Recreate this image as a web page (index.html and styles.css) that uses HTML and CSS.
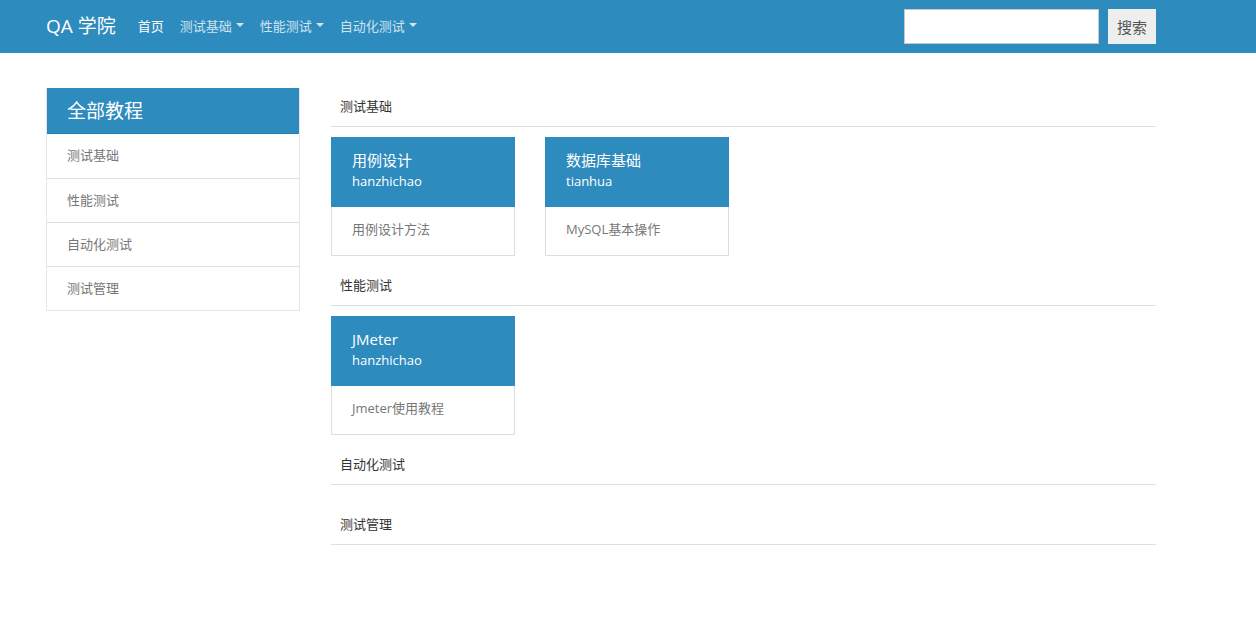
FILE: index.html
```html
<!DOCTYPE html>
<html lang="zh">
<head>
<meta charset="utf-8">
<title>QA 学院</title>
<link rel="stylesheet" href="styles.css">
</head>
<body>
<header class="navbar">
  <div class="nav-inner">
    <a class="brand" href="#">QA 学院</a>
    <ul class="nav-links">
      <li><a class="active" href="#">首页</a></li>
      <li><a href="#">测试基础<span class="caret"></span></a></li>
      <li><a href="#">性能测试<span class="caret"></span></a></li>
      <li><a href="#">自动化测试<span class="caret"></span></a></li>
    </ul>
    <form class="search">
      <input class="search-input" type="text">
      <button class="search-btn" type="button">搜索</button>
    </form>
  </div>
</header>
<div class="page">
  <aside class="sidebar">
    <div class="sidebar-head">全部教程</div>
    <a class="side-item" href="#">测试基础</a>
    <a class="side-item" href="#">性能测试</a>
    <a class="side-item" href="#">自动化测试</a>
    <a class="side-item" href="#">测试管理</a>
  </aside>
  <main class="main">
    <section class="section">
      <h3 class="section-title">测试基础</h3>
      <div class="cards">
        <div class="card">
          <div class="card-top">
            <div class="card-title">用例设计</div>
            <div class="card-author">hanzhichao</div>
          </div>
          <div class="card-body">用例设计方法</div>
        </div>
        <div class="card">
          <div class="card-top">
            <div class="card-title">数据库基础</div>
            <div class="card-author">tianhua</div>
          </div>
          <div class="card-body">MySQL基本操作</div>
        </div>
      </div>
    </section>
    <section class="section">
      <h3 class="section-title">性能测试</h3>
      <div class="cards">
        <div class="card">
          <div class="card-top">
            <div class="card-title">JMeter</div>
            <div class="card-author">hanzhichao</div>
          </div>
          <div class="card-body">Jmeter使用教程</div>
        </div>
      </div>
    </section>
    <section class="section">
      <h3 class="section-title">自动化测试</h3>
      <div class="cards"></div>
    </section>
    <section class="section">
      <h3 class="section-title">测试管理</h3>
      <div class="cards"></div>
    </section>
  </main>
</div>
</body>
</html>
```
FILE: styles.css
```css
* { box-sizing: border-box; }
html, body { margin: 0; padding: 0; }
body {
  font-family: "Open Sans", "Noto Sans CJK SC", sans-serif;
  font-size: 14px;
  color: #333;
  background: #fff;
}
a { text-decoration: none; }

.navbar {
  background: #2e8bbe;
  height: 53px;
}
.nav-inner {
  width: 1110px;
  margin-left: 46px;
  height: 53px;
  display: flex;
  align-items: center;
}
.brand {
  color: #fff;
  font-size: 19px;
  margin-right: 22px;
  line-height: 26px;
  padding-bottom: 2px;
}
.nav-links {
  list-style: none;
  margin: 0;
  padding: 0 0 3px;
  display: flex;
  gap: 16px;
}
.nav-links a {
  color: #cfe3f0;
  font-size: 13px;
  display: flex;
  align-items: center;
}
.nav-links a.active { color: #fff; }
.caret {
  display: inline-block;
  width: 0;
  height: 0;
  margin-left: 4px;
  border-top: 4px solid #cfe3f0;
  border-left: 4px solid transparent;
  border-right: 4px solid transparent;
}
.search {
  margin-left: auto;
  display: flex;
  gap: 9px;
}
.search-input {
  width: 195px;
  height: 35px;
  border: 1px solid #c8c8c8;
  background: #fff;
  margin: 0;
  padding: 4px 8px;
}
.search-btn {
  height: 35px;
  width: 48px;
  border: none;
  background: #eee;
  color: #555;
  font-family: "Noto Sans CJK SC", sans-serif;
  font-size: 15px;
  padding: 0;
}

.page {
  display: flex;
  gap: 31px;
  width: 1110px;
  margin: 35px 0 0 46px;
}
.sidebar {
  width: 254px;
  flex: none;
  border: 1px solid #e5e5e5;
  align-self: flex-start;
}
.sidebar-head {
  background: #2e8bbe;
  color: #fff;
  font-size: 19px;
  height: 46px;
  line-height: 46px;
  padding-left: 20px;
  margin: -1px 0 0;
  border-bottom: 1px solid #2a7fae;
}
.side-item {
  display: block;
  height: 44px;
  line-height: 43px;
  padding-left: 20px;
  color: #777;
  font-size: 13px;
  border-top: 1px solid #e0e0e0;
}
.sidebar-head + .side-item { border-top: none; }

.main {
  flex: 1;
}
.section-title {
  margin: 0;
  font-size: 13px;
  font-weight: normal;
  color: #333;
  line-height: 20px;
  padding: 8px 9px 10px;
  border-bottom: 1px solid #e0e0e0;
}
.cards {
  display: flex;
  gap: 30px;
  padding: 10px 0 11px;
  min-height: 21px;
}
.card {
  width: 184px;
  height: 119px;
  border: 1px solid #ddd;
  display: flex;
  flex-direction: column;
}
.card-top {
  background: #2e8bbe;
  height: 70px;
  margin: -1px -1px 0;
  padding: 12px 21px 0;
  color: #fff;
}
.card-title {
  font-size: 15px;
  line-height: 22px;
}
.card-author {
  font-size: 13px;
  line-height: 20px;
}
.card-body {
  padding-left: 20px;
  line-height: 44px;
  font-size: 13px;
  color: #777;
}
```
